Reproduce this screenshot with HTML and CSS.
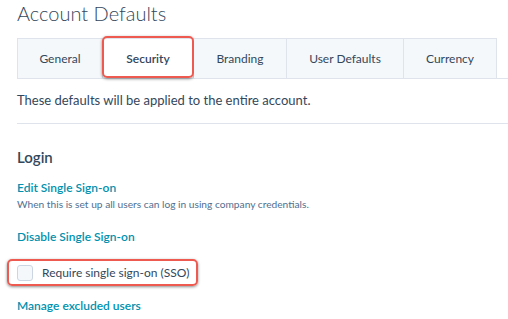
FILE: index.html
```html
<!DOCTYPE html>
<html lang="en">
<head>
  <meta charset="UTF-8" />
  <title>Account Defaults</title>
  <link rel="stylesheet" href="styles.css">
</head>
<body>
  <div class="page">
    <h1 class="title">Account Defaults</h1>
    <div class="tabs">
      <div class="tab">General</div>
      <div class="tab active">Security</div>
      <div class="tab">Branding</div>
      <div class="tab">User Defaults</div>
      <div class="tab">Currency</div>
    </div>
    <p class="intro">These defaults will be applied to the entire account.</p>
    <hr class="divider">
    <h2 class="section-title">Login</h2>
    <a class="link" href="#">Edit Single Sign-on</a>
    <p class="help">When this is set up all users can log in using company credentials.</p>
    <a class="link disable" href="#">Disable Single Sign-on</a>
    <label class="check-row">
      <span class="checkbox"></span>
      <span>Require single sign-on (SSO)</span>
    </label>
    <a class="link manage" href="#">Manage excluded users</a>
  </div>
</body>
</html>
```

FILE: styles.css
```css
* { margin: 0; padding: 0; box-sizing: border-box; }
body {
  font-family: Lato, "Open Sans", sans-serif;
  color: #33475b;
  background: #fff;
  overflow: hidden;
}
.page {
  padding-left: 17px;
}
.title {
  font-size: 20px;
  font-weight: 300;
  line-height: 26px;
  height: 26px;
}
.tabs {
  display: flex;
  margin-top: 12px;
  border-bottom: 1px solid #dfe3eb;
}
.tab {
  height: 40px;
  display: flex;
  align-items: center;
  justify-content: center;
  font-size: 12px;
  background: #f5f8fa;
  border: 1px solid #dfe3eb;
  border-bottom: none;
  border-left: none;
  position: relative;
}
.tab:first-child { border-left: 1px solid #dfe3eb; width: 86px; }
.tab:nth-child(2) { width: 91px; }
.tab:nth-child(3) { width: 93px; }
.tab:nth-child(4) { width: 117px; }
.tab:nth-child(5) { width: 93px; }
.tab.active {
  background: #fff;
  font-weight: 600;
}
.tab.active::after {
  content: '';
  position: absolute;
  top: -3px;
  left: -1px;
  right: -1px;
  bottom: 0;
  border: 2.5px solid #ef5a50;
  border-radius: 5px;
  box-shadow: 0 1px 3px rgba(0, 0, 0, 0.45);
}
.intro {
  font-size: 13px;
  line-height: 18px;
  margin-top: 12px;
}
.divider {
  border: none;
  border-top: 1px solid #dfe3eb;
  margin-top: 14px;
}
.section-title {
  font-size: 15px;
  font-weight: 600;
  line-height: 20px;
  margin-top: 23px;
}
.link {
  display: block;
  color: #0091ae;
  font-size: 12px;
  font-weight: 600;
  line-height: 18px;
  text-decoration: none;
}
.section-title + .link { margin-top: 12px; }
.help {
  font-size: 10.2px;
  line-height: 16px;
  margin-top: -1px;
  color: #516f90;
}
.disable { margin-top: 16px; }
.check-row {
  display: inline-flex;
  align-items: center;
  gap: 9px;
  margin: 13px 0 0 -10px;
  padding: 3px 7px 2px 8px;
  border: 2.5px solid #ef5a50;
  border-radius: 5px;
  box-shadow: 0 1px 3px rgba(0, 0, 0, 0.45);
  font-size: 12px;
  line-height: 18px;
}
.checkbox {
  width: 16px;
  height: 16px;
  border: 1px solid #cbd6e2;
  border-radius: 3px;
  background: #f5f8fa;
}
.manage { margin-top: 11px; }
```
